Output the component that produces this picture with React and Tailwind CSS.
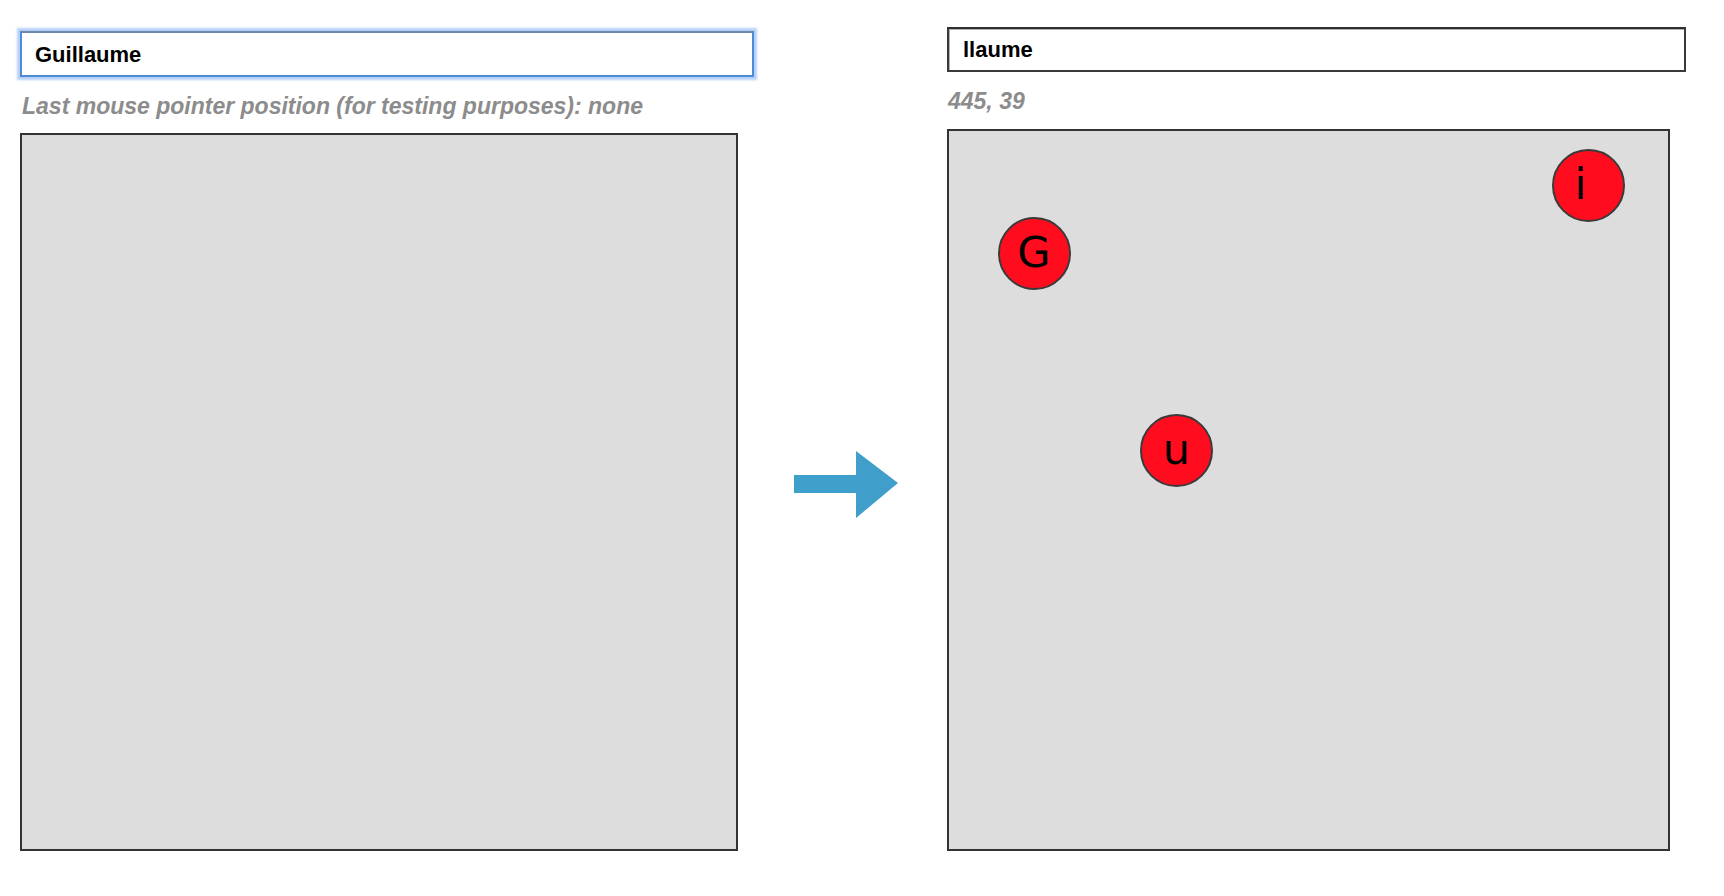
export default function App() {
  const circles = [
    { ch: "G", x: 87, y: 124.5, dx: 0 },
    { ch: "u", x: 229.5, y: 321.5, dx: 0 },
    { ch: "i", x: 641.5, y: 56.5, dx: -8 },
  ];
  return (
    <div className="flex items-start bg-white w-[1724px] h-[896px] pl-[20px]" style={{ fontFamily: '"Liberation Sans", Arial, sans-serif' }}>
      <div className="flex flex-col w-[734px] pt-[31px]">
        <div className="h-[46px] w-[734px] border-2 border-[#4f8ad6] border-t-[#6d87a8] bg-white shadow-[0_0_2px_3px_rgba(120,170,240,0.55)] flex items-center pl-[13px] text-[22px] font-bold text-black">
          Guillaume
        </div>
        <div className="mt-[15px] pl-[2px] h-[28px] leading-[28px] text-[23px] font-bold italic text-[#8c8c8c] whitespace-nowrap">
          Last mouse pointer position (for testing purposes): none
        </div>
        <div className="mt-[13px] w-[718px] h-[718px] bg-[#dddddd] border-2 border-[#333333]"></div>
      </div>
      <div className="w-[193px] shrink-0 pt-[451px] pl-[40px]">
        <svg width="105" height="68" viewBox="0 0 105 68">
          <polygon points="0,24 62,24 62,0 104,32 62,67 62,42 0,42" fill="#409fca" />
        </svg>
      </div>
      <div className="flex flex-col pt-[27px]">
        <div className="h-[45px] w-[739px] border-2 border-[#3a3a3a] border-t-[#2f2f2f] shadow-[inset_1px_1px_0_#b0b0b0] bg-white flex items-center pl-[14px] text-[22px] font-bold text-black">
          llaume
        </div>
        <div className="mt-[15px] pl-[1px] h-[28px] leading-[28px] text-[23px] font-bold italic text-[#8c8c8c] whitespace-nowrap">
          445, 39
        </div>
        <div className="relative mt-[14px] w-[723px] h-[722px] bg-[#dddddd] border-2 border-[#333333]">
          {circles.map((c) => (
            <div
              key={c.ch}
              className="absolute w-[73px] h-[73px] rounded-full bg-[#ff0d1e] border-2 border-[#3a3a3a] flex items-center justify-center text-[43px] leading-none text-black"
              style={{ left: c.x - 38.5, top: c.y - 38.5, fontFamily: '"DejaVu Sans", sans-serif' }}
            >
              <span className="-mt-[2px]" style={{ marginLeft: c.dx * 2 }}>{c.ch}</span>
            </div>
          ))}
        </div>
      </div>
    </div>
  );
}
